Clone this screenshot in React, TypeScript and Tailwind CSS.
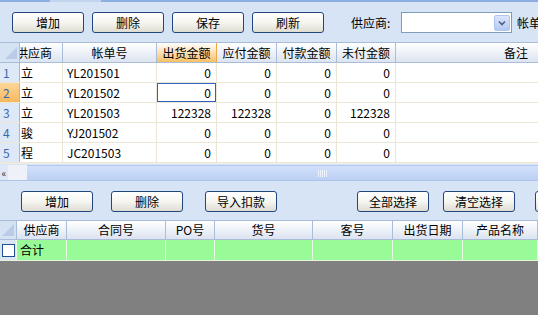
import React from "react";

const grid1Rows = [
  { no: 1, s: "立", id: "YL201501", a: "0", b: "0", c: "0", d: "0" },
  { no: 2, s: "立", id: "YL201502", a: "0", b: "0", c: "0", d: "0" },
  { no: 3, s: "立", id: "YL201503", a: "122328", b: "122328", c: "0", d: "122328" },
  { no: 4, s: "骏", id: "YJ201502", a: "0", b: "0", c: "0", d: "0" },
  { no: 5, s: "程", id: "JC201503", a: "0", b: "0", c: "0", d: "0" },
];

const grid2Cols = [
  { w: 17, t: "" },
  { w: 50, t: "供应商" },
  { w: 99, t: "合同号" },
  { w: 49, t: "PO号" },
  { w: 98, t: "货号" },
  { w: 80, t: "客号" },
  { w: 70, t: "出货日期" },
  { w: 75, t: "产品名称" },
];

const Btn = ({ label, className = "" }: { label: string; className?: string }) => (
  <button
    type="button"
    className={`w-[72px] h-[21px] shrink-0 rounded-[3px] border border-[#22467c] bg-linear-to-b from-white via-[#f6f5f0] to-[#dedcd2] text-[12px] leading-[19px] text-black ${className}`}
  >
    {label}
  </button>
);

const Corner = () => (
  <div className="relative w-full h-full">
    <div className="absolute right-[2px] bottom-[3px] w-0 h-0 border-l-[12px] border-l-transparent border-b-[12px] border-b-[#b9cbe6]" />
  </div>
);

export default function App() {
  const hdr =
    "h-full shrink-0 border-r border-[#a9bcd8] bg-linear-to-b from-white to-[#dce4f0] flex items-center justify-center overflow-hidden whitespace-nowrap";
  const cell = "h-full shrink-0 border-r border-[#ece6d4] flex items-center overflow-hidden whitespace-nowrap";

  return (
    <div className="w-[538px] h-[315px] overflow-hidden bg-[#d7e4f6] flex flex-col text-[12px] text-black font-['Noto_Sans_CJK_SC',sans-serif]">
      {/* tab strip */}
      <div className="flex h-[2px] shrink-0">
        <div className="w-[50px] bg-[#8db0e2]" />
        <div className="w-[51px] bg-[#c3d5ee]" />
        <div className="flex-1 bg-[#8db0e2]" />
      </div>

      {/* toolbar 1 */}
      <div className="flex items-center h-[21px] mt-[10px] pl-[12px] shrink-0">
        <div className="flex gap-[8px] shrink-0">
          <Btn label="增加" />
          <Btn label="删除" />
          <Btn label="保存" />
          <Btn label="刷新" />
        </div>
        <span className="ml-[27px] w-[50px] shrink-0 whitespace-nowrap">供应商:</span>
        <div className="w-[111px] h-[21px] bg-white border border-[#7f9db9] flex items-center justify-end pr-[1px] shrink-0">
          <div className="w-[16px] h-[16px] rounded-[2px] bg-linear-to-b from-[#dbe6fb] to-[#b4c9f3] border border-[#b0c6ee] flex items-center justify-center">
            <svg width="8" height="6" viewBox="0 0 8 6">
              <path d="M1 1.5 L4 4.5 L7 1.5" fill="none" stroke="#4d6185" strokeWidth="1.6" />
            </svg>
          </div>
        </div>
        <span className="ml-[5px] shrink-0 whitespace-nowrap">帐单</span>
      </div>

      {/* grid 1 */}
      <div className="mt-[9px] shrink-0 border-t border-[#a9bcd8] bg-white">
        <div className="flex h-[20px] border-b border-[#a9bcd8]">
          <div className={`${hdr} w-[20px] bg-none bg-[#d5e2f4]`}>
            <Corner />
          </div>
          <div className={`${hdr} w-[43px] justify-start`}>
            <span className="-ml-[4px]">供应商</span>
          </div>
          <div className={`${hdr} w-[94px]`}>帐单号</div>
          <div className={`${hdr} w-[60px] from-[#fde6b0] to-[#f6bf62] border-[#efa848]`}>出货金额</div>
          <div className={`${hdr} w-[60px]`}>应付金额</div>
          <div className={`${hdr} w-[60px]`}>付款金额</div>
          <div className={`${hdr} w-[59px]`}>未付金额</div>
          <div className={`${hdr} w-[142px] justify-end pr-[10px] border-r-0`}>备注</div>
        </div>
        {grid1Rows.map((r) => (
          <div key={r.no} className="flex h-[20px] border-b border-[#ece6d4]">
            <div
              className={`h-full w-[20px] shrink-0 border-r border-[#9fb7dc] flex items-center pl-[3px] text-[#3868ad] ${
                r.no === 2 ? "bg-linear-to-b from-[#fcd79a] to-[#f6b85c]" : "bg-[#dee8f6]"
              }`}
            >
              {r.no}
            </div>
            <div className={`${cell} w-[43px] pl-[1px]`}>{r.s}</div>
            <div className={`${cell} w-[94px] pl-[4px]`}>{r.id}</div>
            <div
              className={`${cell} w-[60px] justify-end pr-[5px] ${
                r.no === 2 ? "shadow-[inset_0_0_0_1px_#2f62c2]" : ""
              }`}
            >
              {r.a}
            </div>
            <div className={`${cell} w-[60px] justify-end pr-[5px]`}>{r.b}</div>
            <div className={`${cell} w-[60px] justify-end pr-[5px]`}>{r.c}</div>
            <div className={`${cell} w-[59px] justify-end pr-[5px]`}>{r.d}</div>
            <div className={`${cell} w-[142px] border-r-0`} />
          </div>
        ))}
        <div className="h-[1px] bg-[#efeee8]" />
      </div>

      {/* horizontal scrollbar */}
      <div className="flex h-[16px] shrink-0 mt-[1px] border-b border-[#aec4e8]">
        <div className="w-[8px] bg-[#dfe8f6] flex items-center justify-center text-[10px] leading-none text-[#333] overflow-hidden">
          «
        </div>
        <div className="w-[19px] bg-[#eef2f8]" />
        <div className="flex-1 bg-linear-to-b from-[#d2e0fa] to-[#bcd0f4] border-t border-[#b3c8ee] flex items-center pl-[291px]">
          <svg width="9" height="7" viewBox="0 0 9 7">
            <path d="M0.5 0 V7 M2.5 0 V7 M4.5 0 V7 M6.5 0 V7 M8.5 0 V7" stroke="#eef4ff" strokeWidth="1" />
          </svg>
        </div>
      </div>

      {/* toolbar 2 */}
      <div className="flex items-center h-[21px] mt-[10px] pl-[21px] shrink-0">
        <Btn label="增加" />
        <Btn label="删除" className="ml-[18px]" />
        <Btn label="导入扣款" className="ml-[22px]" />
        <Btn label="全部选择" className="ml-[80px]" />
        <Btn label="清空选择" className="ml-[14px]" />
        <Btn label="" className="ml-[20px]" />
      </div>

      {/* grid 2 */}
      <div className="mt-[8px] shrink-0">
        <div className="flex h-[20px] border-t border-b border-[#a9bcd8]">
          {grid2Cols.map((c, i) => (
            <div
              key={i}
              className={`${hdr} ${i === 0 ? "bg-none bg-[#d5e2f4]" : ""}`}
              style={{ width: c.w }}
            >
              {i === 0 ? <Corner /> : c.t}
            </div>
          ))}
        </div>
        <div className="flex h-[21px] border-b border-[#e6f3df] bg-[#98fb98]">
          {grid2Cols.map((c, i) => (
            <div
              key={i}
              className={`h-full shrink-0 border-r border-[#e8f8e2] flex items-center ${
                i === 0 ? "bg-[#dbe6f4] border-[#a9bcd8] justify-center" : ""
              } ${i === 1 ? "pl-[3px]" : ""}`}
              style={{ width: c.w }}
            >
              {i === 0 && <div className="w-[13px] h-[13px] bg-white border border-[#1f4f8c]" />}
              {i === 1 && "合计"}
            </div>
          ))}
        </div>
      </div>

      <div className="flex-1 bg-[#808080]" />
    </div>
  );
}
